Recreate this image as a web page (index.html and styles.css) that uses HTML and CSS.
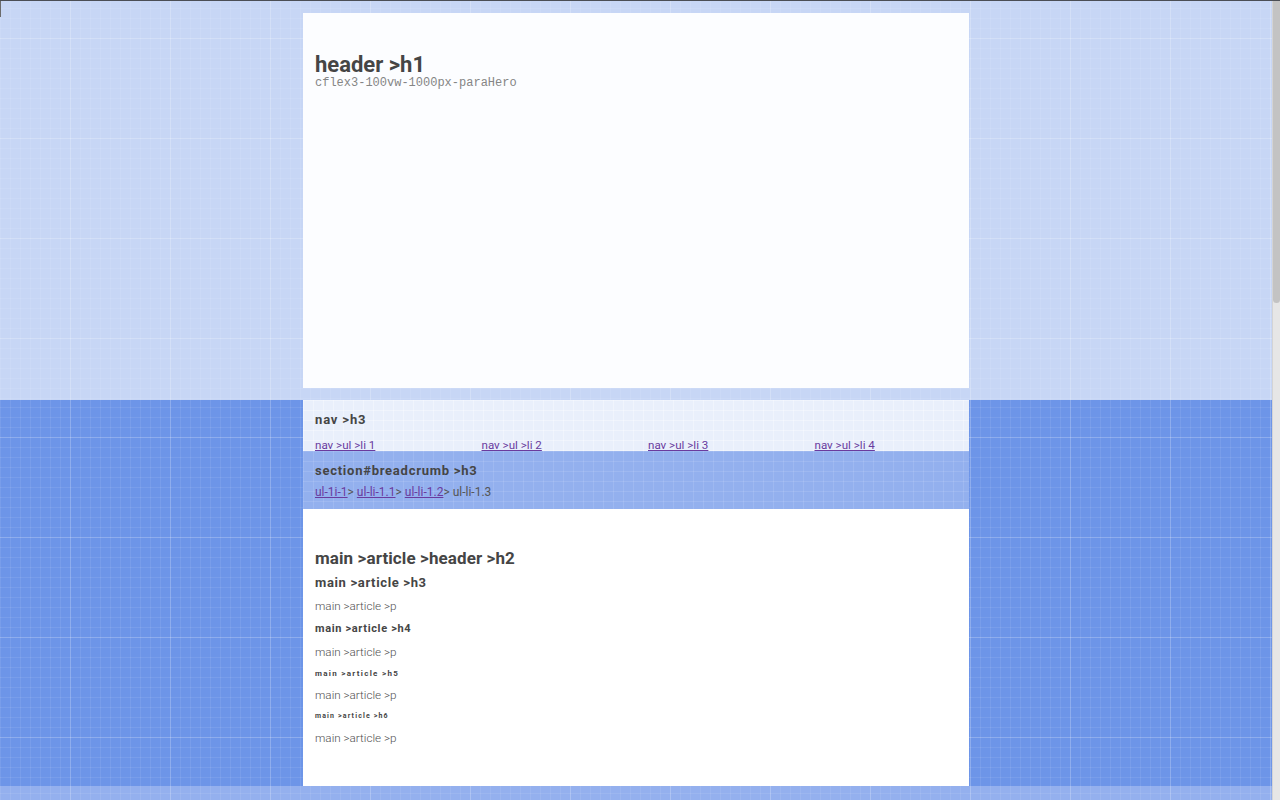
FILE: index.html
```html
<!DOCTYPE html>
<html lang="en">
<head>
<meta charset="utf-8">
<title>cflex3</title>
<link rel="stylesheet" href="styles.css">
</head>
<body>
<div class="band band-top">
  <header class="col hero">
    <h1 class="hero-title">header &gt;h1</h1>
    <p class="hero-para">cflex3-100vw-1000px-paraHero</p>
  </header>
</div>
<div class="band band-main">
  <div class="col">
    <nav class="nav">
      <h3 class="h3">nav &gt;h3</h3>
      <ul class="nav-list">
        <li class="nav-item"><a href="#">nav &gt;ul &gt;li 1</a></li>
        <li class="nav-item"><a href="#">nav &gt;ul &gt;li 2</a></li>
        <li class="nav-item"><a href="#">nav &gt;ul &gt;li 3</a></li>
        <li class="nav-item"><a href="#">nav &gt;ul &gt;li 4</a></li>
      </ul>
    </nav>
    <section class="crumbs" id="breadcrumb">
      <h3 class="h3">section#breadcrumb &gt;h3</h3>
      <ul class="crumb-list">
        <li><a href="#">ul-1i-1</a>&gt; </li>
        <li><a href="#">ul-li-1.1</a>&gt; </li>
        <li><a href="#">ul-li-1.2</a>&gt; </li>
        <li>ul-li-1.3</li>
      </ul>
    </section>
    <main class="main">
      <article class="article">
        <header><h2 class="a-h2">main &gt;article &gt;header &gt;h2</h2></header>
        <h3 class="a-h3">main &gt;article &gt;h3</h3>
        <p class="a-p">main &gt;article &gt;p</p>
        <h4 class="a-h4">main &gt;article &gt;h4</h4>
        <p class="a-p">main &gt;article &gt;p</p>
        <h5 class="a-h5">main &gt;article &gt;h5</h5>
        <p class="a-p">main &gt;article &gt;p</p>
        <h6 class="a-h6">main &gt;article &gt;h6</h6>
        <p class="a-p">main &gt;article &gt;p</p>
      </article>
    </main>
  </div>
</div>
<footer class="band band-foot"></footer>
<div class="scrollbar" aria-hidden="true"><div class="scrollbar-thumb"></div></div>
</body>
</html>
```

FILE: styles.css
```css
html {
  border-top: 1px solid #4b4e55;
  background: #e6e6e6;
}
body {
  margin: 0 8px 0 0;
  font-family: Roboto, "Liberation Sans", sans-serif;
  color: #444;
  position: relative;
}
body::before {
  content: "";
  position: absolute;
  left: 0;
  top: 0;
  width: 1px;
  height: 16px;
  background: #6b6b6b;
}
.scrollbar {
  position: fixed;
  top: 1px;
  right: 0;
  width: 8px;
  bottom: 0;
  background: #e6e6e6;
  border-left: 1px solid #d4d4d4;
  box-sizing: border-box;
}
.scrollbar-thumb {
  height: 302px;
  background: #c3c3c3;
  border-radius: 0 0 4px 4px;
}
.band {
  --grid-minor: rgba(255, 255, 255, 0.08);
  --grid-major: rgba(255, 255, 255, 0.16);
  background-image:
    linear-gradient(to right, var(--grid-major) 1px, transparent 1px),
    linear-gradient(to bottom, var(--grid-major) 1px, transparent 1px),
    linear-gradient(to right, var(--grid-minor) 1px, transparent 1px),
    linear-gradient(to bottom, var(--grid-minor) 1px, transparent 1px);
  background-size: 100px 100px, 100px 100px, 10px 10px, 10px 10px;
  background-position: 70px 37px, 70px 37px, 0 -3px, 0 -3px;
}
.band-top {
  background-color: #c7d6f5;
  padding: 12px 0 12px;
}
.band-main {
  background-color: #6d95e8;
}
.band-foot {
  background-color: #94b0ee;
  height: 14px;
}
.col {
  width: 666px;
  margin: 0 auto;
}
.hero {
  background: #fcfdff;
  height: 375px;
  box-sizing: border-box;
  padding: 40px 12px 0;
}
.hero-title {
  margin: 0;
  font-size: 22px;
  line-height: 24px;
  font-weight: 700;
  color: #454545;
}
.hero-para {
  margin: 0;
  font-family: "Liberation Mono", monospace;
  font-size: 12px;
  line-height: 12px;
  color: #858585;
}
.h3 {
  margin: 0;
  font-size: 13px;
  line-height: 20px;
  font-weight: 700;
  letter-spacing: 0.85px;
  color: #454545;
}
.nav {
  background-color: #e9effb;
  background-image:
    linear-gradient(to right, rgba(255,255,255,0.3) 1px, transparent 1px),
    linear-gradient(to bottom, rgba(255,255,255,0.3) 1px, transparent 1px);
  background-size: 10px 10px;
  height: 51px;
  overflow: hidden;
  box-sizing: border-box;
  padding-top: 10px;
}
.nav .h3 {
  padding: 0 12px;
}
.nav-list {
  list-style: none;
  margin: 7px 0 0;
  padding: 0;
  display: grid;
  grid-template-columns: repeat(4, 1fr);
}
.nav-item {
  padding: 0 12px;
  font-size: 11.6px;
  line-height: 16px;
}
a {
  color: #6a3b9e;
}
.crumbs {
  background-color: #93b0ee;
  background-image:
    linear-gradient(to right, rgba(255,255,255,0.1) 1px, transparent 1px),
    linear-gradient(to bottom, rgba(255,255,255,0.1) 1px, transparent 1px);
  background-size: 10px 10px;
  padding: 10px 12px 8px;
  height: 58px;
  box-sizing: border-box;
}
.crumbs .h3 {
  letter-spacing: 0.75px;
}
.crumb-list {
  list-style: none;
  margin: 2px 0 0;
  padding: 0;
  display: flex;
  font-size: 12px;
  line-height: 18px;
  color: #555;
  white-space: pre;
}
.main {
  background: #fff;
  padding: 36px 12px 37px;
}
.article {
  display: flex;
  flex-direction: column;
}
.article h2, .article h3, .article h4, .article h5, .article h6, .article p {
  margin: 0;
}
.a-h2 {
  font-size: 17px;
  line-height: 26px;
  font-weight: 700;
  letter-spacing: 0.1px;
  color: #454545;
}
.a-h3 {
  font-size: 13px;
  line-height: 24px;
  font-weight: 700;
  letter-spacing: 0.65px;
  color: #454545;
}
.a-p {
  font-size: 11.7px;
  line-height: 22px;
  font-weight: 300;
  color: #4f4f4f;
}
.a-h4 {
  font-size: 11px;
  line-height: 24px;
  font-weight: 700;
  letter-spacing: 0.65px;
  color: #454545;
}
.a-h5 {
  font-size: 8px;
  line-height: 21px;
  font-weight: 700;
  letter-spacing: 1.3px;
  color: #454545;
}
.a-h6 {
  font-size: 7px;
  line-height: 21px;
  font-weight: 700;
  letter-spacing: 1.15px;
  color: #454545;
}
```
